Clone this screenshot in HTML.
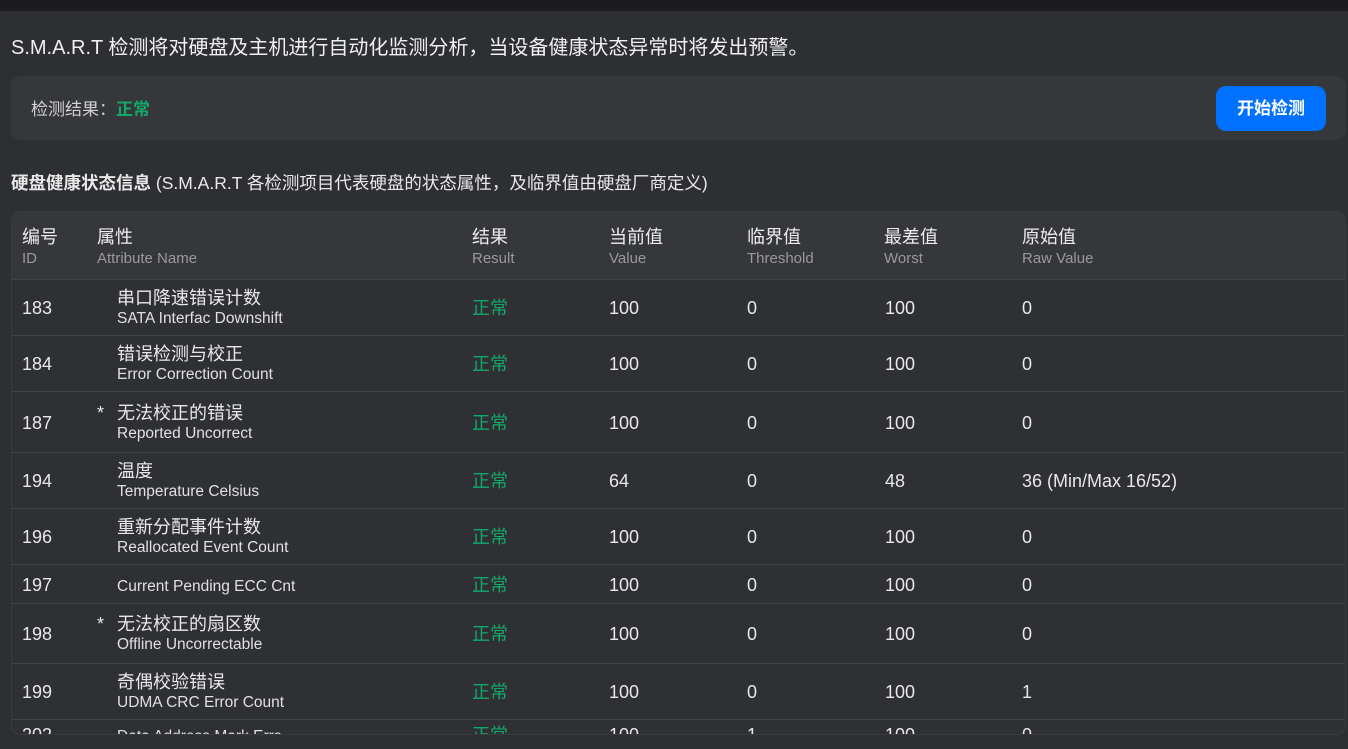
<!DOCTYPE html>
<html><head><meta charset="utf-8"><style>
*{margin:0;padding:0;box-sizing:border-box}
body{width:1348px;height:749px;overflow:hidden;background:#2e2f32;font-family:"Liberation Sans","Noto Sans CJK SC",sans-serif;color:#e8e8e8;position:relative}
.top{height:11px;background:#1c1c1e}
.intro{position:absolute;left:11px;top:35px;font-size:20px;line-height:26px;color:#f0f0f0}
.card{position:absolute;left:11px;top:76px;width:1335px;height:64px;background:#36373a;border-radius:10px}
.card .l{position:absolute;left:20px;top:22px;font-size:17px;line-height:24px;color:#d0d0d0}
.card .l b{color:#13a86a}
.btn{position:absolute;left:1205px;top:10px;width:110px;height:45px;background:#0071fe;border-radius:10px;color:#fff;font-weight:bold;font-size:17px;text-align:center;line-height:45px}
.sub{position:absolute;left:11px;top:171px;font-size:17.5px;line-height:24px;color:#e8e8e8}
.tbl{position:absolute;left:11px;top:211px;width:1335px;height:524px;background:#2f3033;border:1px solid #3a3b3e;border-radius:10px;overflow:hidden}
.row{position:absolute;left:0;width:100%;border-top:1px solid #414245}
.hd{top:0;height:67px;background:#36373a;border-top:none}
.c{position:absolute;font-size:18px;line-height:22px}
.cn{font-size:18px;color:#ececec;line-height:24px}
.en{font-size:15px;color:#999;line-height:20px}
.nm{font-size:18px;line-height:22px}
.ne{font-size:15.5px;line-height:20px;color:#e0e0e0}
.ok{color:#13a86a}
</style></head><body>
<div class="top"></div>
<div class="intro">S.M.A.R.T 检测将对硬盘及主机进行自动化监测分析，当设备健康状态异常时将发出预警。</div>
<div class="card"><div class="l">检测结果：<b>正常</b></div><div class="btn">开始检测</div></div>
<div class="sub"><b>硬盘健康状态信息</b> (S.M.A.R.T 各检测项目代表硬盘的状态属性，及临界值由硬盘厂商定义)</div>
<div class="tbl">
<div class="row hd">
<div class="c" style="left:10px;top:13px"><div class="cn">编号</div><div class="en">ID</div></div>
<div class="c" style="left:85px;top:13px"><div class="cn">属性</div><div class="en">Attribute Name</div></div>
<div class="c" style="left:460px;top:13px"><div class="cn">结果</div><div class="en">Result</div></div>
<div class="c" style="left:597px;top:13px"><div class="cn">当前值</div><div class="en">Value</div></div>
<div class="c" style="left:735px;top:13px"><div class="cn">临界值</div><div class="en">Threshold</div></div>
<div class="c" style="left:872px;top:13px"><div class="cn">最差值</div><div class="en">Worst</div></div>
<div class="c" style="left:1010px;top:13px"><div class="cn">原始值</div><div class="en">Raw Value</div></div>
</div>
<div id="rows"></div>
</div>
<script>
var d=[[183,"","串口降速错误计数","SATA Interfac Downshift",100,0,100,"0",67,56],
[184,"","错误检测与校正","Error Correction Count",100,0,100,"0",123,56],
[187,"*","无法校正的错误","Reported Uncorrect",100,0,100,"0",179,61],
[194,"","温度","Temperature Celsius",64,0,48,"36 (Min/Max 16/52)",240,56],
[196,"","重新分配事件计数","Reallocated Event Count",100,0,100,"0",296,56],
[197,"","","Current Pending ECC Cnt",100,0,100,"0",352,39],
[198,"*","无法校正的扇区数","Offline Uncorrectable",100,0,100,"0",391,60],
[199,"","奇偶校验错误","UDMA CRC Error Count",100,0,100,"1",451,56],
[202,"","","Data Address Mark Errs",100,1,100,"0",507,30]];
var h="";d.forEach(function(r){var m=r[9]/2-11;
h+='<div class="row" style="top:'+r[8]+'px;height:'+r[9]+'px">'+
'<div class="c" style="left:10px;top:'+m+'px">'+r[0]+'</div>'+
'<div class="c" style="left:85px;top:'+(m-10)+'px">'+r[1]+'</div>'+
'<div class="c" style="left:105px;top:'+(r[2]?m-10:m+3)+'px">'+(r[2]?'<div class="nm">'+r[2]+'</div>':'')+'<div class="ne">'+r[3]+'</div></div>'+
'<div class="c ok" style="left:460px;top:'+m+'px">正常</div>'+
'<div class="c" style="left:597px;top:'+m+'px">'+r[4]+'</div>'+
'<div class="c" style="left:735px;top:'+m+'px">'+r[5]+'</div>'+
'<div class="c" style="left:873px;top:'+m+'px">'+r[6]+'</div>'+
'<div class="c" style="left:1010px;top:'+m+'px">'+r[7]+'</div></div>';});
document.getElementById("rows").innerHTML=h;
</script>
</body></html>
